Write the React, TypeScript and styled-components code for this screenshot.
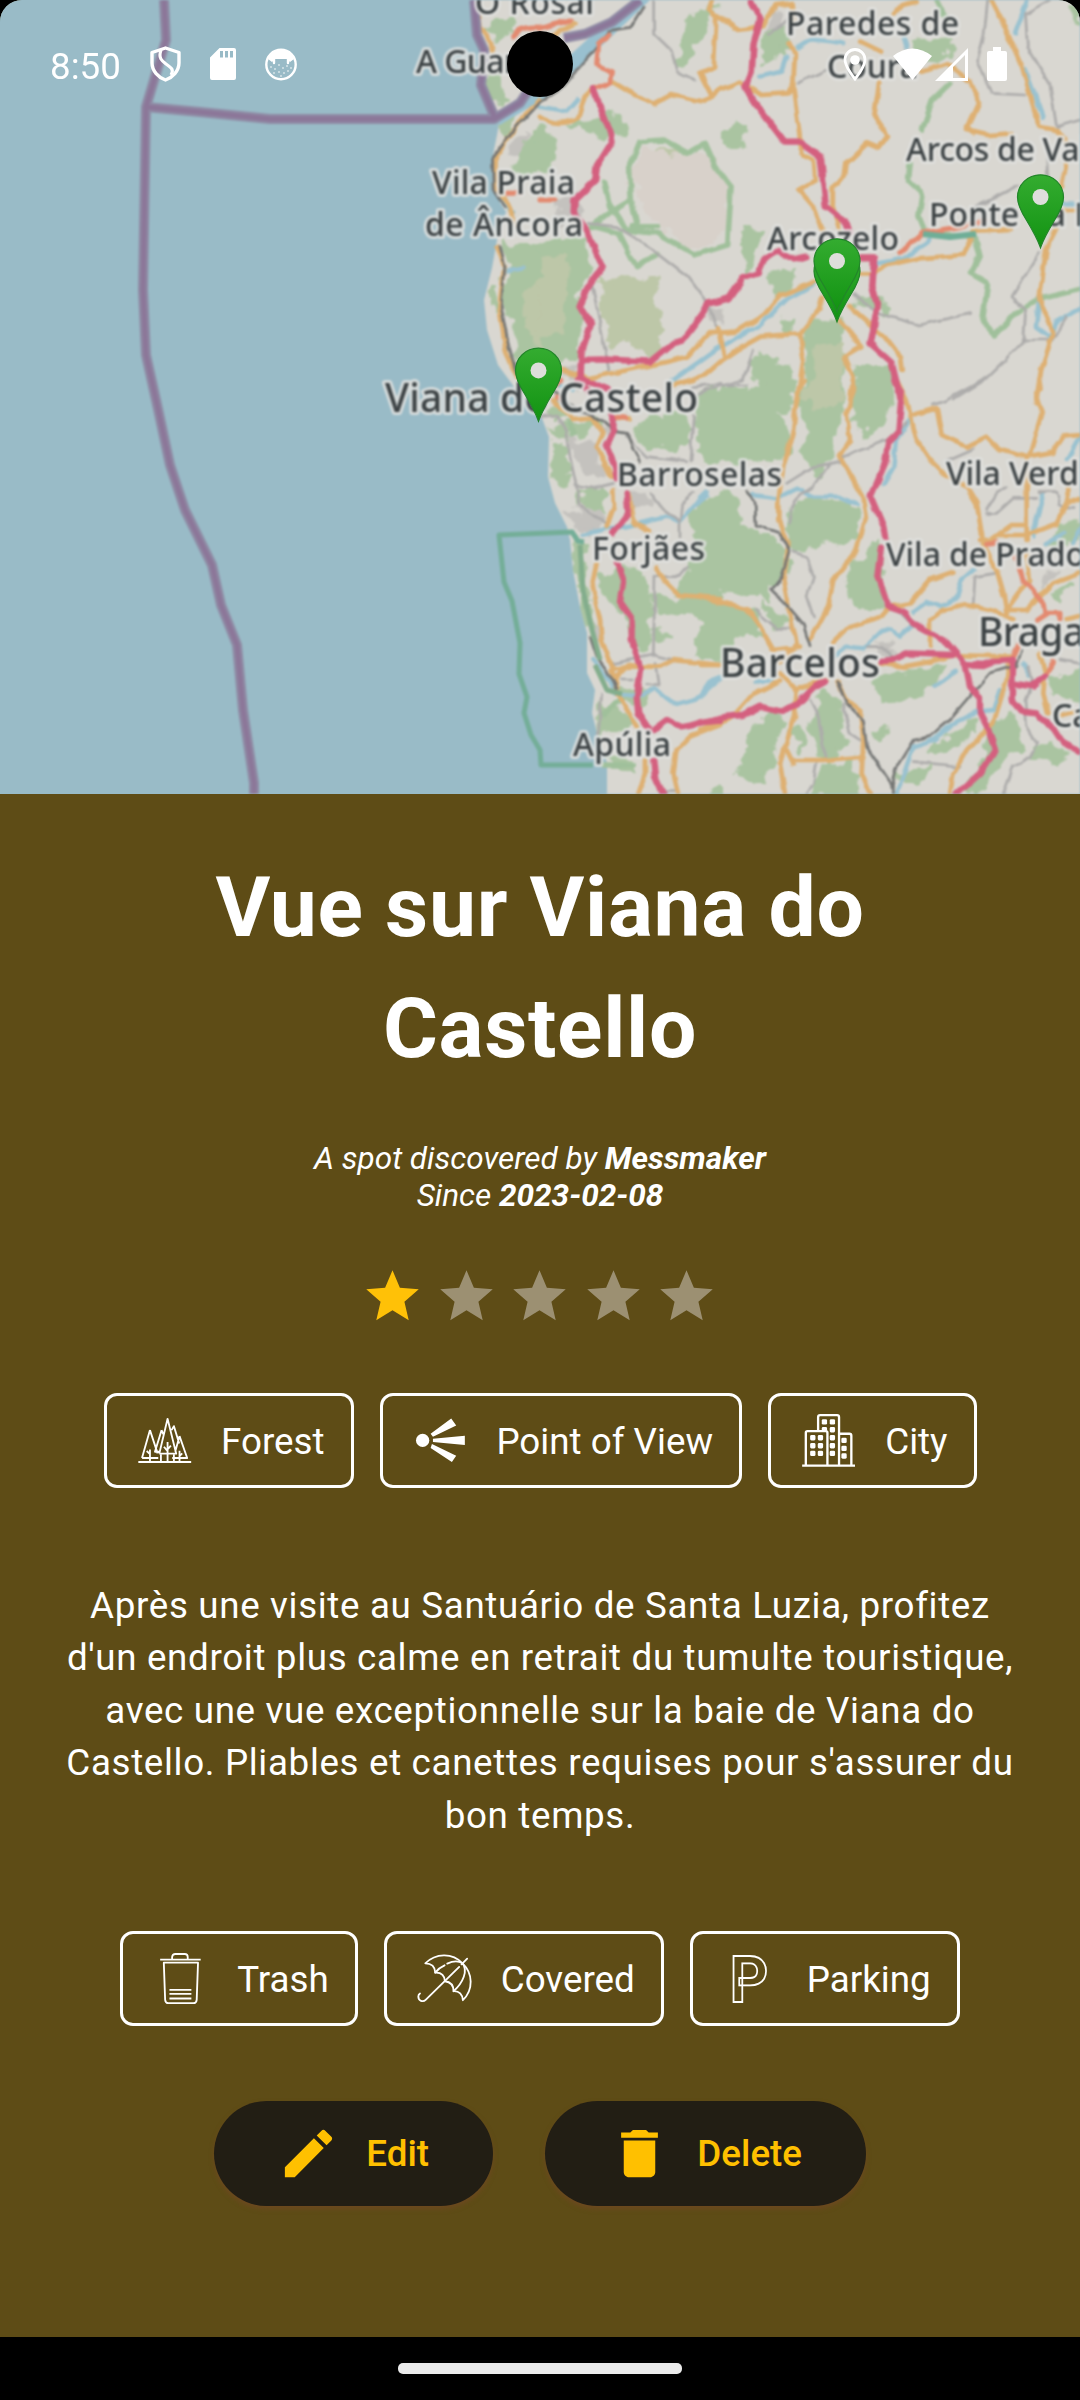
import React from 'react';
import styled, { createGlobalStyle } from 'styled-components';

const GlobalStyle = createGlobalStyle`
  *, *::before, *::after { box-sizing: border-box; }
  html, body { margin: 0; padding: 0; background: #000; }
  body { font-family: Roboto, "Liberation Sans", sans-serif; -webkit-font-smoothing: antialiased; }
`;

const Screen = styled.main`
  width: 1080px;
  height: 2400px;
  display: flex;
  flex-direction: column;
  background: #5e4c16;
  color: #fff;
  overflow: hidden;
  border-radius: 22px 22px 0 0;
`;

const MapHeader = styled.header`
  position: relative;
  height: 794px;
  flex: none;
  overflow: hidden;
  background: #99bbc7;
`;

const MapDrawing = styled.svg`
  display: block;
  width: 1080px;
  height: 794px;
  filter: blur(0.9px);
  font-family: "Noto Sans", "Open Sans", sans-serif;
`;

const PinLayer = styled.svg`
  position: absolute;
  inset: 0;
`;

const StatusBar = styled.div`
  position: absolute;
  inset: 0 0 auto 0;
  height: 128px;
  padding: 0 73px 0 50px;
  display: flex;
  justify-content: space-between;
  align-items: center;
`;

const StatusGroup = styled.div`
  display: flex;
  align-items: center;
`;

const Clock = styled.time`
  width: 75px;
  font-size: 36.75px;
  line-height: 43px;
  padding-top: 4px;
`;

const StatusIcon = styled.svg<{ $gap: number }>`
  flex: none;
  margin-left: ${(p) => p.$gap}px;
  fill: #fff;
`;

const Camera = styled.div`
  position: absolute;
  left: 507px;
  top: 31px;
  width: 66px;
  height: 66px;
  border-radius: 50%;
  background: #000;
`;

const Body = styled.section`
  flex: 1;
  display: flex;
  flex-direction: column;
  align-items: center;
  padding: 53px 52px 0;
  text-align: center;
`;

const Title = styled.h1`
  margin: 0;
  width: 800px;
  font-size: 84px;
  line-height: 121px;
  font-weight: 700;
  letter-spacing: 0.656px;
`;

const Credit = styled.p`
  margin: 51px 0 0;
  font-size: 31.5px;
  line-height: 37px;
  font-style: italic;
`;

const Stars = styled.div`
  display: flex;
  gap: 10.5px;
  margin: 51px 1px 0 0;
`;

const StarIcon = styled.svg<{ $on: boolean }>`
  width: 63px;
  height: 63px;
  fill: ${(p) => (p.$on ? '#ffc107' : '#9c9072')};
`;

const ChipRow = styled.div<{ $top: number }>`
  display: flex;
  gap: 26px;
  margin-top: ${(p) => p.$top}px;
`;

const Chip = styled.div<{ $width: number }>`
  width: ${(p) => p.$width}px;
  height: 94.5px;
  display: flex;
  align-items: center;
  justify-content: space-between;
  padding: 0 26px 0 31px;
  border: 3px solid #fff;
  border-radius: 13px;
  font-size: 36.75px;
  line-height: 52px;
  white-space: nowrap;
`;

const ChipLabel = styled.span`
  padding-top: 2px;
`;

const ChipIcon = styled.svg`
  width: 52.5px;
  height: 52.5px;
  flex: none;
  overflow: visible;
  fill: none;
  stroke: #fff;
`;

const Description = styled.p`
  margin: 92px 0 0;
  width: 970px;
  font-size: 36.75px;
  line-height: 52.5px;
  letter-spacing: 0.656px;
`;

const Actions = styled.div`
  display: flex;
  gap: 52px;
  margin-top: 75px;
`;

const ActionButton = styled.button<{ $width: number }>`
  width: ${(p) => p.$width}px;
  height: 105px;
  padding: 0 64px 0 63px;
  display: flex;
  align-items: center;
  justify-content: space-between;
  border: 0;
  border-radius: 53px;
  background: #221e14;
  color: #ffc000;
  box-shadow: 0 3px 5px rgba(120, 70, 40, 0.55);
  font: 500 36.75px/52px Roboto, sans-serif;
  white-space: nowrap;
`;

const ActionIcon = styled.svg`
  width: 63px;
  height: 63px;
  flex: none;
  fill: currentColor;
`;

const NavBar = styled.footer`
  height: 63px;
  flex: none;
  display: flex;
  justify-content: center;
  align-items: center;
  background: #000;
`;

const HomeHandle = styled.div`
  width: 284px;
  height: 11px;
  border-radius: 5px;
  background: #ebebeb;
`;

/* ---------- map data: each sheet has its own survey grid ---------- */

interface Sheet {
  at: string;
  wood?: string;
  olive?: string;
  heath?: string;
  town?: string;
  water?: string;
  park?: string;
  minor?: string;
  rail?: string;
  orange?: string;
  coral?: string;
  pink?: string;
}

const sheets: Sheet[] = [
  {
    at: 'scale(.34439 .33333)',
    wood:
      'M1420 80L1480 48 1492 90 1440 117ZM1410 230L1450 220 1460 290 1430 310ZM1505 460L1568 385V512L1500 500ZM1452 350L1490 345 1470 410ZM1475 735L1568 730V1130L1510 1060 1475 900ZM1412 890L1440 850 1430 930Z',
    olive: 'M1525 880L1568 850V1060L1535 980Z',
    town: 'M1475 460L1530 400 1510 470ZM1480 760L1520 790 1480 800Z',
    coral: 'M1492 110Q1510 75 1568 82M1470 580H1510',
    orange:
      'M1385 0L1395 80 1425 125 1430 150M1568 300L1520 350 1440 470 1435 560 1475 610 1500 680M1445 740L1465 800 1450 920 1470 1060 1510 1150',
    rail: 'M1568 305L1500 380 1430 475 1432 570 1465 620M1452 740L1466 800 1455 920 1478 1040 1500 1120',
    water: 'M1440 585L1490 640M1470 815L1520 805',
  },
  {
    at: 'translate(540 0) scale(.34439 .33333)',
    wood:
      'M0 375L40 425 45 490 0 512ZM0 740L60 722 130 740 150 800 110 870 118 960 100 1070 0 1075ZM535 400L570 365 592 375 597 440 550 440ZM650 100L710 90 705 165 650 180ZM1080 130L1190 115 1185 160 1090 185ZM590 690L645 695 610 800 590 770ZM665 825L735 810 720 865 680 880ZM780 980L870 960 880 1100 860 1220H775ZM615 1080L650 1065 720 1110 700 1210H640ZM920 1090L1010 1110 1030 1210H920ZM480 1180L560 1160 600 1175 600 1210H480ZM100 730L140 720 140 790ZM430 70L500 10 480 100 440 160 410 200ZM990 900L1020 920 1000 950ZM700 960L740 950 720 1000ZM100 370L230 350 240 400 160 400ZM1545 20L1568 10V60ZM925 895L980 900 960 930Z',
    olive: 'M180 840L330 835 350 1050 310 1060 240 1010 210 1040 185 950ZM800 1040L880 1030 860 1210H800ZM0 780L80 770 60 1000 0 1010ZM345 450L390 450 350 540Z',
    heath: 'M290 450L430 470 480 460 545 560 540 700 450 740 340 680 270 540Z',
    town: 'M50 600L100 590 120 640 60 670ZM490 920L520 930 520 980 490 960ZM650 90L700 40 700 90ZM40 1110L110 1100 100 1150Z',
    water:
      'M750 145L790 118 850 125 880 130M640 230L700 215 715 170M380 1145L510 1050 640 975 720 895 800 850M1415 0L1380 100M1410 210L1460 350M1568 925L1500 965 1480 1010 1440 980 1450 890M0 320L80 335 110 300M980 790L1060 775 1130 720M1055 110L1065 145M1520 610H1568',
    park:
      'M290 425L360 420 430 460 480 430 510 500 555 560 545 735 450 765 340 700 250 690 200 610 185 545M290 425L260 500 265 600 200 640 150 680M265 600L285 690M160 680L230 700 280 800 340 760M1190 250L1140 300 1110 390M1075 490L1070 540 1110 580 1100 650 1120 700 1260 708 1275 770 1250 820 1300 850 1285 960 1320 1005 1380 940 1440 900 1568 868M270 680H340M1150 0L1180 60',
    minor:
      'M330 0L330 100 380 150 400 215 450 240M1300 0L1290 100 1270 180 1310 280 1410 285M1480 0L1410 40 1415 140 1480 250 1500 380 1568 360M140 670L220 680 330 750 430 830 480 900 520 990M150 850L180 1000 200 1110M910 880L980 940 1100 975 1250 940M1450 760L1370 890 1410 930 1405 1020 1350 1080 1280 1150 1200 1200M480 1170L590 1140 620 1050M1250 630L1390 555M750 250L830 210M1400 1020H1490L1530 950M660 100L720 60M1470 450L1475 540',
    rail: 'M0 305L60 265 150 160 200 95 260 85 300 20',
    orange:
      'M500 0L490 30 512 50 505 200 465 220 500 290M512 45L575 90 610 85 650 75 685 15 730 10 735 60M725 130L740 160 735 260 745 340 755 415M210 245L250 270 330 312 380 285 480 305 520 270 580 245 640 285 720 280 735 250M0 350Q50 385 110 355L130 290 155 265M985 250L970 350 1010 410 985 445 950 430 890 490 885 530 850 560V630M750 425L765 465 795 480 800 540 750 570 800 630 820 690M850 620L870 690M1310 0L1340 60 1370 130 1400 200 1430 310 1450 380 1500 390 1530 430M1110 215L1180 190 1250 245 1275 310 1240 390 1300 405 1370 400M1030 40L1050 15 1090 5M930 125L990 155M1530 480L1515 560M1500 690L1470 750 1450 900 1490 1000 1455 1110 1440 1210M800 845L700 885 650 945 570 995 490 1000 430 1070 350 1090 140 1135 60 1110M930 820H970L1010 795 1100 775 1230 765 1260 695 1370 690M820 890L810 930 755 1000 640 1010 580 1045 530 1080 480 1125 390 1155M520 985L535 1070M755 1000L765 1080 745 1210M870 960L935 1040 885 1070 910 1130 900 1210M900 920L1000 1010 1045 1070 1050 1110M30 110L100 70M1500 630H1568M1240 380L1260 400',
    coral: 'M200 105L170 130 165 195 210 215 205 245 155 268M1045 760L1110 700 1220 680 1290 660M0 85L90 60M0 600H40M40 1160L60 1140',
    pink:
      'M610 0L640 60 620 130 615 215 597 260 610 290 710 425 755 425 815 470 830 620 890 670 900 700M770 770L740 778 690 755Q640 775 635 820L590 835 550 895 490 910 470 945 415 1020 385 1030 320 1085 190 1078 120 1080M155 268L205 400 210 425 165 500 160 540 100 600 98 635 135 690 155 740 183 800 145 850 115 920 148 975 120 1060 118 1130M930 775H970L965 860 980 920 960 1030 1020 1085 1050 1210M118 1135L200 1170',
  },
  {
    at: 'translate(340 380) scale(.33333)',
    wood:
      'M890 160L930 110 1030 105 1045 190 930 215ZM1075 60L1140 20V150L1070 140ZM1080 200L1140 180V245L1100 235ZM640 185L680 200 690 280 640 285ZM690 130L780 130 750 165 700 155ZM728 345L790 330 795 385 740 388ZM640 290L690 300 680 320 645 312ZM1060 390L1140 370V670L1000 640 1050 570 1070 490ZM780 595L850 560 900 580 935 690 920 800 890 810 870 720 800 650ZM930 640L990 660 1140 650V830L1070 830 1110 740 1050 690 960 700ZM705 480L730 480 740 620 760 740 735 740 720 640ZM790 970L870 1010 870 1040 770 1060ZM830 930L930 935 900 970 860 960ZM800 1140L880 1150 870 1170ZM1090 1243L1140 1225V1243ZM940 760L990 765 960 790ZM640 150L680 140 680 170ZM620 90L690 95 650 115Z',
    town:
      'M690 170L760 200 790 290 730 270ZM790 130L830 120 830 160ZM720 370L790 400 780 440 730 410ZM680 390L760 440 740 460 700 430ZM860 340L920 340 930 380 880 385ZM760 720L790 770 770 790Z',
    water:
      'M640 10L700 30M730 465L800 445 860 440 920 425 980 410 1020 425 1050 390 1100 345M760 840L800 890 830 940 900 945 940 925 1010 975 1065 960 1140 895M650 60L690 90',
    park: 'M690 130L700 160M720 560L735 680M790 1000L840 960M790 1155H880',
    minor:
      'M600 110L650 105 680 150 690 230 705 300 720 370 750 400 800 430M705 315L760 325 820 310M1060 110L1050 240M930 340L960 380 1020 425 1025 370 1060 340M1020 430L1020 470M945 590L940 830M945 590L1020 590 1045 560M820 850L940 825 1000 840M840 900H880M945 850L955 915 920 910M785 940L775 1060M960 1235H1010M1060 20L1140 10M860 170L920 230 1040 245',
    rail: 'M640 30L720 90 780 120 830 155 860 160 880 210 900 245M750 770L770 830 800 870 830 930',
    orange:
      'M640 60L700 120 760 115 790 160 770 200 815 290M820 330L822 380 800 440M840 115H870M865 340L885 430 930 450M770 550L755 620 780 720 785 780 820 870 870 855 900 860 960 860 1000 840 1140 855M815 870L830 930 850 970 890 1040M950 560L970 600 1015 645 1140 655M915 1140L915 1180 895 1243M1140 1035L1050 1070 1010 1110 1000 1180 1015 1243M1010 10L1060 0M930 860L860 860 820 900',
    coral: 'M820 110L860 115M650 50L670 60',
    pink:
      'M715 0L745 35M810 105L825 150 800 200 825 260 830 295M860 340L865 400 820 460M830 545L850 600 840 665 875 715 875 780 903 870 890 950 895 1000 925 1045M940 1140L945 1190 970 1243M940 1050L980 1020 1030 1042 1080 1028 1140 1022',
  },
  {
    at: 'translate(700 380) scale(.33333)',
    wood:
      'M0 70L50 30 130 55 200 0H290L260 90 225 110 270 150 260 240 180 230 100 250 0 210ZM290 60L330 10 420 0 420 80 400 190 360 290 300 220 340 150ZM470 0H580L560 110 500 160 460 130ZM270 420L290 370 350 355 430 370 480 410 460 470 380 490 310 515 270 490ZM0 370L70 340 130 360 120 440 190 460 260 520 250 590 200 610 210 660 100 620 0 660ZM0 660L170 700 190 780 130 750 110 800 50 820 0 830ZM455 560L540 480 545 690 500 690 450 650ZM180 670L260 720 230 740ZM520 920L560 880 650 880 730 855 700 920 620 960 550 970ZM150 1060L200 1010 240 1010 220 1150 190 1210 100 1180 150 1130ZM370 930L410 960 440 1090 380 1130 330 1070ZM370 1170L450 1140 470 1243H330ZM690 1110L760 1060 820 1030 790 1080 710 1130ZM870 1070L930 990 960 1060 960 1110 900 1160 830 1243H780L840 1180ZM1050 900L1140 870V960L1060 940ZM990 1130L1040 1080 1100 1120 1070 1150ZM590 1190L690 1160 650 1210ZM1070 630L1110 620 1070 655ZM520 1050L560 1040 540 1080ZM1060 480L1120 430 1140 450 1080 500ZM270 1040L310 1030 300 1110Z',
    olive: 'M310 50L340 0H410L420 70 340 80Z',
    town: 'M300 60L330 40 320 100ZM1020 590L1070 570 1030 610ZM550 810L580 800 570 840ZM530 790L570 800 560 830Z',
    water:
      'M550 310L580 260 588 180 630 120M160 345L230 355 290 325 340 350 420 350 470 375M0 355L20 335M400 830L440 800 490 805 540 755 570 745 600 770 640 735M640 695L680 665 720 680 770 655 785 600 820 570M590 1243L640 1100 700 1080 760 1030 830 995 880 990 900 930M700 920L770 875M1030 340L1005 440M1000 445L1000 470M1100 240L1140 170M1040 490L1090 460M0 950L30 905 70 890M170 905L220 900M970 850L990 890M1120 490L1140 450',
    minor:
      'M0 40L60 15 140 15M390 250L340 320 280 360 270 430M430 230L560 180 620 130M260 310L340 260 420 245M280 515L320 530 340 590 320 650 340 710M165 690L230 745H270M590 690L640 740M700 75L740 60 850 0M860 400L890 400 940 355H1010M1020 335H1070L1080 375 1120 380M820 670L825 590 885 580M330 960L355 1010 375 1130M350 1150L340 1210 320 1243M430 970L450 1060 480 1080M640 1145L740 1155 780 1160M1140 850L1080 840M980 860L1000 900 975 960 980 1040 1010 1090 990 1130 940 1160 910 1243M500 800L550 800 580 840M960 1150L990 1130M860 390L890 340 920 320M740 240L820 205',
    rail:
      'M140 335L165 365 168 435 240 460 268 510 245 590 215 630 250 665 310 735 330 800M410 905L440 970 490 1020 500 1100 540 1160 580 1220 580 1243M415 910L435 960M575 1220L590 1160 640 1080 690 1070 750 1020 870 880 950 855 965 810',
    orange:
      'M315 0L290 50 280 150 250 260 235 360 235 420 265 500 250 600 265 680 290 790 240 850M455 0L465 30 440 100 450 180 420 230 490 350 500 405 470 510 400 600 385 680 330 780M590 0L620 60 650 180 690 240 740 290 800 320 830 370 850 490 890 570 910 640 920 700M640 105L710 85 725 165 800 200 860 170 900 210 980 230 1060 215 1090 170 1140 165M1020 0L1025 30 1005 40 1025 100 990 220M980 230L980 480M840 480H870L930 435H980M890 465L980 465 1070 430 1105 360 1140 360M1105 360L1100 310M400 785L440 745 540 715 570 680 630 670 690 600 760 575M690 800L690 720 730 690 800 675 870 690 940 715M920 690L970 620 990 600 980 520M920 690H980L1060 610 1140 580M0 650L140 685 180 740 220 810 300 800M0 855L60 855M240 880L290 930 285 1010 255 1100 240 1150 255 1243M100 1005L150 950 240 905M300 920L380 900M280 1140L370 1140 490 1130M410 905L440 960 480 990 490 1080 485 1180 510 1243M540 850L610 860 690 845 760 825 930 830 920 900 880 1030 800 1110 760 1180 750 1243M1020 820L1035 880 1030 940 1045 1000M1085 1005L1140 990M1100 720L1140 710M0 1050L60 1030 100 1010M285 930L350 910M260 1110L280 1150',
    coral: 'M860 490L890 485M945 530L970 600 1030 670 1035 700H1080V720M1010 720L1040 700M955 790L935 835M1060 845L1035 890',
    pink:
      'M580 0L605 40 595 155 565 185 555 250 512 350 550 440 555 470M543 500L532 590 565 680 610 695 640 730 740 785 795 850 810 920 840 950V1000L865 1050 885 1110 840 1180 770 1243M790 852L850 855 880 843 940 840 935 960 965 995 1010 1000 1060 1045 1090 1090 1140 1115M940 910L1000 920 1035 890M755 825L620 820 580 840 545 843M375 905L340 925 290 975 240 995 180 980 130 1005 80 1010 0 1028',
  },
];

type LineKey = 'water' | 'park' | 'minor' | 'rail' | 'orange' | 'coral' | 'pink';
type AreaKey = 'town' | 'wood' | 'olive' | 'heath';

const areaStyles: [AreaKey, string][] = [
  ['town', '#c4c2be'],
  ['wood', '#aac4a1'],
  ['olive', '#bdc7a8'],
  ['heath', '#d8d1ca'],
];

const lineStyles: [LineKey, string, number][] = [
  ['park', '#a0c09b', 16],
  ['water', '#9ac2d0', 13],
  ['minor', '#adacab', 8],
  ['orange', '#deb072', 14],
  ['rail', '#747674', 8],
  ['coral', '#e38a6f', 15],
  ['pink', '#d4607f', 19],
];

interface Place {
  name: string;
  x: number;
  y: number;
  size: number;
  width?: number;
}

const places: Place[] = [
  { name: 'O Rosal', x: 475, y: 14, size: 32, width: 119 },
  { name: 'A Guarda', x: 416, y: 73, size: 32, width: 138 },
  { name: 'Vila Praia', x: 432, y: 194, size: 32, width: 143 },
  { name: 'de Âncora', x: 425, y: 236, size: 32, width: 158 },
  { name: 'Paredes de', x: 786, y: 35, size: 32, width: 173 },
  { name: 'Coura', x: 827, y: 78, size: 32, width: 91 },
  { name: 'Arcos de Valdevez', x: 906, y: 161, size: 32, width: 268 },
  { name: 'Ponte da Barca', x: 929, y: 226, size: 32, width: 232 },
  { name: 'Arcozelo', x: 767, y: 250, size: 32, width: 132 },
  { name: 'Viana do Castelo', x: 385, y: 412, size: 39, width: 313 },
  { name: 'Barroselas', x: 617, y: 486, size: 32, width: 165 },
  { name: 'Forjães', x: 592, y: 560, size: 32, width: 113 },
  { name: 'Apúlia', x: 573, y: 756, size: 32, width: 98 },
  { name: 'Vila Verde', x: 946, y: 485, size: 32, width: 151 },
  { name: 'Vila de Prado', x: 886, y: 566, size: 32, width: 199 },
  { name: 'Barcelos', x: 720, y: 677, size: 39, width: 160 },
  { name: 'Braga', x: 978, y: 646, size: 39, width: 107 },
  { name: 'Caldas', x: 1052, y: 727, size: 32 },
];

const coast =
  'M473 0L474 37 482 50 480 85 490 112 500 118 497 135 492 160 494 193 506 212 497 240 492 268 484 300 487 330 498 365 515 388 540 413 549 437 548 477 555 503 567 527 570 540 573 570 580 607 587 633 587 673 595 690 592 713 597 733 607 763V800H1090V-10H473Z';

const Region = () => (
  <MapDrawing viewBox="0 0 1080 794">
    <defs>
      <filter id="rough" x="0" y="0" width="1080" height="794" filterUnits="userSpaceOnUse">
        <feTurbulence type="fractalNoise" baseFrequency="0.06" numOctaves="3" seed="4" result="n" />
        <feDisplacementMap in="SourceGraphic" in2="n" scale="20" xChannelSelector="R" yChannelSelector="G" />
      </filter>
      <filter id="wobble" x="0" y="0" width="1080" height="794" filterUnits="userSpaceOnUse">
        <feTurbulence type="fractalNoise" baseFrequency="0.08" numOctaves="1" seed="9" result="n" />
        <feDisplacementMap in="SourceGraphic" in2="n" scale="6" xChannelSelector="R" yChannelSelector="G" />
      </filter>
      <clipPath id="land">
        <path d={coast} />
      </clipPath>
    </defs>
    <rect width="1080" height="794" fill="#99bbc7" />
    <path d={coast} fill="#d9d7d1" />
    <g clipPath="url(#land)">
      <g filter="url(#rough)" strokeWidth="12" strokeLinejoin="round">
        {areaStyles.map(([key, color]) =>
          sheets.map(
            (s) => s[key] && <path key={key + s.at} d={s[key]} transform={s.at} fill={color} stroke={color} />,
          ),
        )}
      </g>
      <path d="M490 118L530 90 560 64 600 28 640 0H650L610 38 575 70 545 98 500 125Z" fill="#99c0cf" />
    </g>
    <g filter="url(#wobble)" fill="none" strokeLinejoin="round" strokeLinecap="round">
      {lineStyles.map(([key, color, width]) =>
        sheets.map(
          (s) =>
            s[key] && (
              <path key={key + s.at} d={s[key]} transform={s.at} stroke={color} strokeWidth={width} />
            ),
        )
      )}
    </g>
    <g fill="none" stroke="#74ae98" strokeLinejoin="round">
      <path
        d="M584 542L578 541 572 532 499 535 504 582 512 601 520 643 519 674 527 697 524 713 531 735 540 750 541 765H593"
        strokeWidth="5"
      />
      <path d="M580 545L583 590 592 630 600 660M595 665L607 690 622 694" stroke="#83ad8c" strokeWidth="5" />
      <path d="M923 234L950 237 976 234" stroke="#6fae97" strokeWidth="6" />
    </g>
    <g fill="none" strokeLinejoin="round">
      {[
        ['#8f8aa4', 10],
        ['#8c7799', 5],
      ].map(([color, width]) => (
        <path
          key={color}
          stroke={color}
          strokeWidth={width}
          d="M164 0L166 40 146 107 143 290 146 355 158 409 170 465 185 510 212 565 221 605 237 645 243 710 254 783V794M146 107L200 112 270 119H494L520 103 530 88M474 0L477 35 484 50 481 85 495 118M564 38L585 34 612 22 640 0"
        />
      ))}
    </g>
    <g
      fill="#3d4345"
      fontWeight="500"
      stroke="#dfe1de"
      strokeWidth="6"
      strokeOpacity=".85"
      strokeLinejoin="round"
      paintOrder="stroke"
    >
      {places.map((p) => (
        <text key={p.name} x={p.x} y={p.y} fontSize={p.size} textLength={p.width}>
          {p.name}
        </text>
      ))}
    </g>
  </MapDrawing>
);

const pins = [
  [538.5, 347.7],
  [1040.5, 174.3],
  [837, 248.3],
  [837, 238.3],
];

const Pins = () => (
  <PinLayer width="1080" height="794" viewBox="0 0 1080 794">
    <defs>
      <linearGradient id="pin" x1="0" y1="0" x2="0" y2="1">
        <stop offset="0" stopColor="#34ac30" />
        <stop offset="1" stopColor="#129312" />
      </linearGradient>
    </defs>
    {pins.map(([x, y]) => (
      <g key={`${x}-${y}`} transform={`translate(${x} ${y})`}>
        <path
          d="M0 .5C13 .5 23 10.500 23 23C23 31 19 38 14 46C8 56 3 65 0 73.500C-3 65-8 56-14 46C-19 38-23 31-23 23C-23 10.500-13 .5 0 .5Z"
          fill="url(#pin)"
          stroke="#23852a"
          strokeWidth="1.200"
        />
        <circle cy="22.700" r="8" fill="#dededb" />
      </g>
    ))}
  </PinLayer>
);

const Status = () => (
  <StatusBar>
    <StatusGroup>
      <Clock>8:50</Clock>
      <StatusIcon $gap={25} width="31" height="36" viewBox="0 0 31 36">
        <path
          d="M15.500 2L29 6.500V17C29 25 22.500 31.500 15.500 34C8.500 31.500 2 25 2 17V6.500Z"
          fill="none"
          stroke="#fff"
          strokeWidth="3.400"
          strokeLinejoin="round"
        />
        <path d="M11 4C8 12 12 15 16 18C22 22 24 24 21 29" fill="none" stroke="#fff" strokeWidth="3.200" />
      </StatusIcon>
      <StatusIcon $gap={29} width="26" height="32" viewBox="0 0 26 32">
        <path
          fillRule="evenodd"
          d="M9.500 0H24Q26 0 26 2V30Q26 32 24 32H2Q0 32 0 30V9.500ZM10 3V9.500H13V3ZM15 3V9.500H18V3ZM20 3V9.500H23V3Z"
        />
      </StatusIcon>
      <StatusIcon $gap={29} width="32" height="33" viewBox="0 0 32 33">
        <circle cx="16" cy="16.500" r="14.700" fill="none" stroke="#fff" strokeWidth="2.400" />
        <path d="M3 11Q7 2 16 2T29 11L25 14 22 11H10L7 14Z" />
        <path d="M9 9V15M23 9V15" stroke="#fff" strokeWidth="2.400" strokeLinecap="round" />
        {[[6, 19], [10, 21], [14, 17], [18, 20], [22, 18], [26, 20], [9, 25], [14, 24], [19, 25], [23, 23], [16, 28]].map(
          ([x, y]) => (
            <circle key={`${x}-${y}`} cx={x} cy={y} r=".8" />
          ),
        )}
      </StatusIcon>
    </StatusGroup>
    <StatusGroup>
      <StatusIcon $gap={0} width="24" height="33" viewBox="0 0 24 33">
        <path
          d="M12 1.500C17.500 1.500 22 6 22 11.500C22 19 12 31 12 31S2 19 2 11.500C2 6 6.500 1.500 12 1.500Z"
          fill="none"
          stroke="#fff"
          strokeWidth="2.800"
        />
        <circle cx="12" cy="12" r="4.800" />
      </StatusIcon>
      <StatusIcon $gap={26} width="39" height="32" viewBox="0 0 39 32">
        <path d="M19.500 32L0 8Q19.500-7 39 8Z" />
      </StatusIcon>
      <StatusIcon $gap={3} width="33" height="33" viewBox="0 0 33 33">
        <path fillRule="evenodd" d="M33 0V33H0ZM30 7L18 19V30H30Z" />
      </StatusIcon>
      <StatusIcon $gap={19} width="20" height="34" viewBox="0 0 20 34">
        <path d="M6 0H14V4H18Q20 4 20 6V32Q20 34 18 34H2Q0 34 0 32V6Q0 4 2 4H6Z" />
      </StatusIcon>
    </StatusGroup>
  </StatusBar>
);

const ForestIcon = () => (
  <ChipIcon viewBox="142 101.500 158 158" strokeWidth="5.500" strokeLinejoin="round">
    <path d="M143 246H302M154 234H203M178 150L154 234M178 150L201 220M206 221H257L231 116L206 221M213 150L193 215H206M213 150L218 162M243 150L250 138L266 190M267 168L290 234H245M267 168L254 215" />
    <path d="M178 208V246M178 222L168 213M211 223V246M231 186V246M231 213L220 200M231 208L241 197M250 223V246M267 212V246M267 228L275 220" />
  </ChipIcon>
);

const ViewIcon = () => (
  <ChipIcon viewBox="969 101.500 158 158">
    <g fill="#fff" stroke="none">
      <circle cx="995" cy="181" r="20" />
      <path d="M1019 161L1081 115 1096 136 1026 170ZM1026 176L1122 167V195L1026 186ZM1023 192L1096 227 1083 246 1019 204Z" />
    </g>
  </ChipIcon>
);

const CityIcon = () => (
  <ChipIcon viewBox="724.500 101.500 158 158" strokeWidth="7" strokeLinejoin="round">
    <path d="M725 257H884M736 255V158Q736 153 741 153H796Q801 153 801 158V255M773 151V111Q773 105 779 105H830Q836 105 836 111V255M836 161H867Q873 161 873 167V255" />
    <g fill="#fff" stroke="none">
      {[
        [784, 117], [808, 117], [808, 141], [808, 165], [808, 189], [808, 212],
        [749, 165], [772, 165], [749, 189], [772, 189], [749, 212], [772, 212],
        [843, 173], [843, 197], [843, 220],
      ].map(([x, y]) => (
        <rect key={`${x}-${y}`} x={x} y={y} width="16" height="16" rx="4" />
      ))}
      <rect x="784" y="141" width="16" height="12" rx="4" />
    </g>
  </ChipIcon>
);

const BinIcon = () => (
  <ChipIcon viewBox="131.500 126 158 158" strokeWidth="5.500" strokeLinejoin="round">
    <path d="M150 149H272M186 147V141Q187 132 196 132H224Q233 132 233 141V147M161 158H264L260 270Q259 280 250 280H175Q166 280 165 270Z" />
    <path d="M178 240H244M178 252H244M178 266H244" />
  </ChipIcon>
);

const UmbrellaIcon = () => (
  <ChipIcon viewBox="922 126 158 158" strokeWidth="5.500" strokeLinejoin="round" strokeLinecap="round">
    <path d="M944 160C975 129 1025 127 1056 160C1088 190 1089 240 1057 271C1056 254 1046 243 1029 244C1029 226 1020 216 1003 214C1002 196 993 187 974 188C973 170 963 160 944 160Z" />
    <path d="M974 188C980 180 990 171 1002 166M1010 161C1025 154 1042 151 1056 160C1073 182 1058 218 1029 244M1070 146L1053 163M1046 171L945 270C937 278 923 273 923 260Q923 254 928 251" />
  </ChipIcon>
);

const ParkingIcon = () => (
  <ChipIcon viewBox="490 126 158 158">
    <text
      x="507"
      y="275"
      fontFamily="Roboto, sans-serif"
      fontWeight="700"
      fontSize="195"
      strokeWidth="5.500"
      textLength="116"
      lengthAdjust="spacingAndGlyphs"
    >
      P
    </text>
  </ChipIcon>
);

const STAR = 'M12 17.270L18.180 21l-1.640-7.030L22 9.240l-7.190-.610L12 2 9.190 8.630 2 9.240l5.460 4.730L5.820 21z';

export default function App() {
  return (
    <>
      <GlobalStyle />
      <Screen>
        <MapHeader>
          <Region />
          <Pins />
          <Status />
          <Camera />
        </MapHeader>
        <Body>
          <Title>Vue sur Viana do Castello</Title>
          <Credit>
            A spot discovered by <b>Messmaker</b>
            <br />
            Since <b>2023-02-08</b>
          </Credit>
          <Stars>
            {[1, 2, 3, 4, 5].map((n) => (
              <StarIcon key={n} $on={n <= 1} viewBox="0 0 24 24">
                <path d={STAR} />
              </StarIcon>
            ))}
          </Stars>
          <ChipRow $top={65.3}>
            <Chip $width={250}>
              <ForestIcon />
              <ChipLabel>Forest</ChipLabel>
            </Chip>
            <Chip $width={362.5}>
              <ViewIcon />
              <ChipLabel>Point of View</ChipLabel>
            </Chip>
            <Chip $width={208.5}>
              <CityIcon />
              <ChipLabel>City</ChipLabel>
            </Chip>
          </ChipRow>
          <Description>
            Après une visite au Santuário de Santa Luzia, profitez d'un endroit plus calme en retrait du tumulte
            touristique, avec une vue exceptionnelle sur la baie de Viana do Castello. Pliables et canettes requises
            pour s'assurer du bon temps.
          </Description>
          <ChipRow $top={89}>
            <Chip $width={237.5}>
              <BinIcon />
              <ChipLabel>Trash</ChipLabel>
            </Chip>
            <Chip $width={280}>
              <UmbrellaIcon />
              <ChipLabel>Covered</ChipLabel>
            </Chip>
            <Chip $width={270}>
              <ParkingIcon />
              <ChipLabel>Parking</ChipLabel>
            </Chip>
          </ChipRow>
          <Actions>
            <ActionButton $width={279}>
              <ActionIcon viewBox="0 0 24 24">
                <path d="M3 17.250V21h3.750L17.810 9.940l-3.750-3.750L3 17.250zM20.710 7.040c.39-.39.39-1.020 0-1.410l-2.340-2.340c-.39-.39-1.020-.39-1.410 0l-1.830 1.830 3.750 3.750 1.830-1.830z" />
              </ActionIcon>
              <ChipLabel>Edit</ChipLabel>
            </ActionButton>
            <ActionButton $width={321}>
              <ActionIcon viewBox="0 0 24 24">
                <path d="M6 19c0 1.100.9 2 2 2h8c1.100 0 2-.9 2-2V7H6v12zM19 4h-3.500l-1-1h-5l-1 1H5v2h14V4z" />
              </ActionIcon>
              <ChipLabel>Delete</ChipLabel>
            </ActionButton>
          </Actions>
        </Body>
        <NavBar>
          <HomeHandle />
        </NavBar>
      </Screen>
    </>
  );
}
